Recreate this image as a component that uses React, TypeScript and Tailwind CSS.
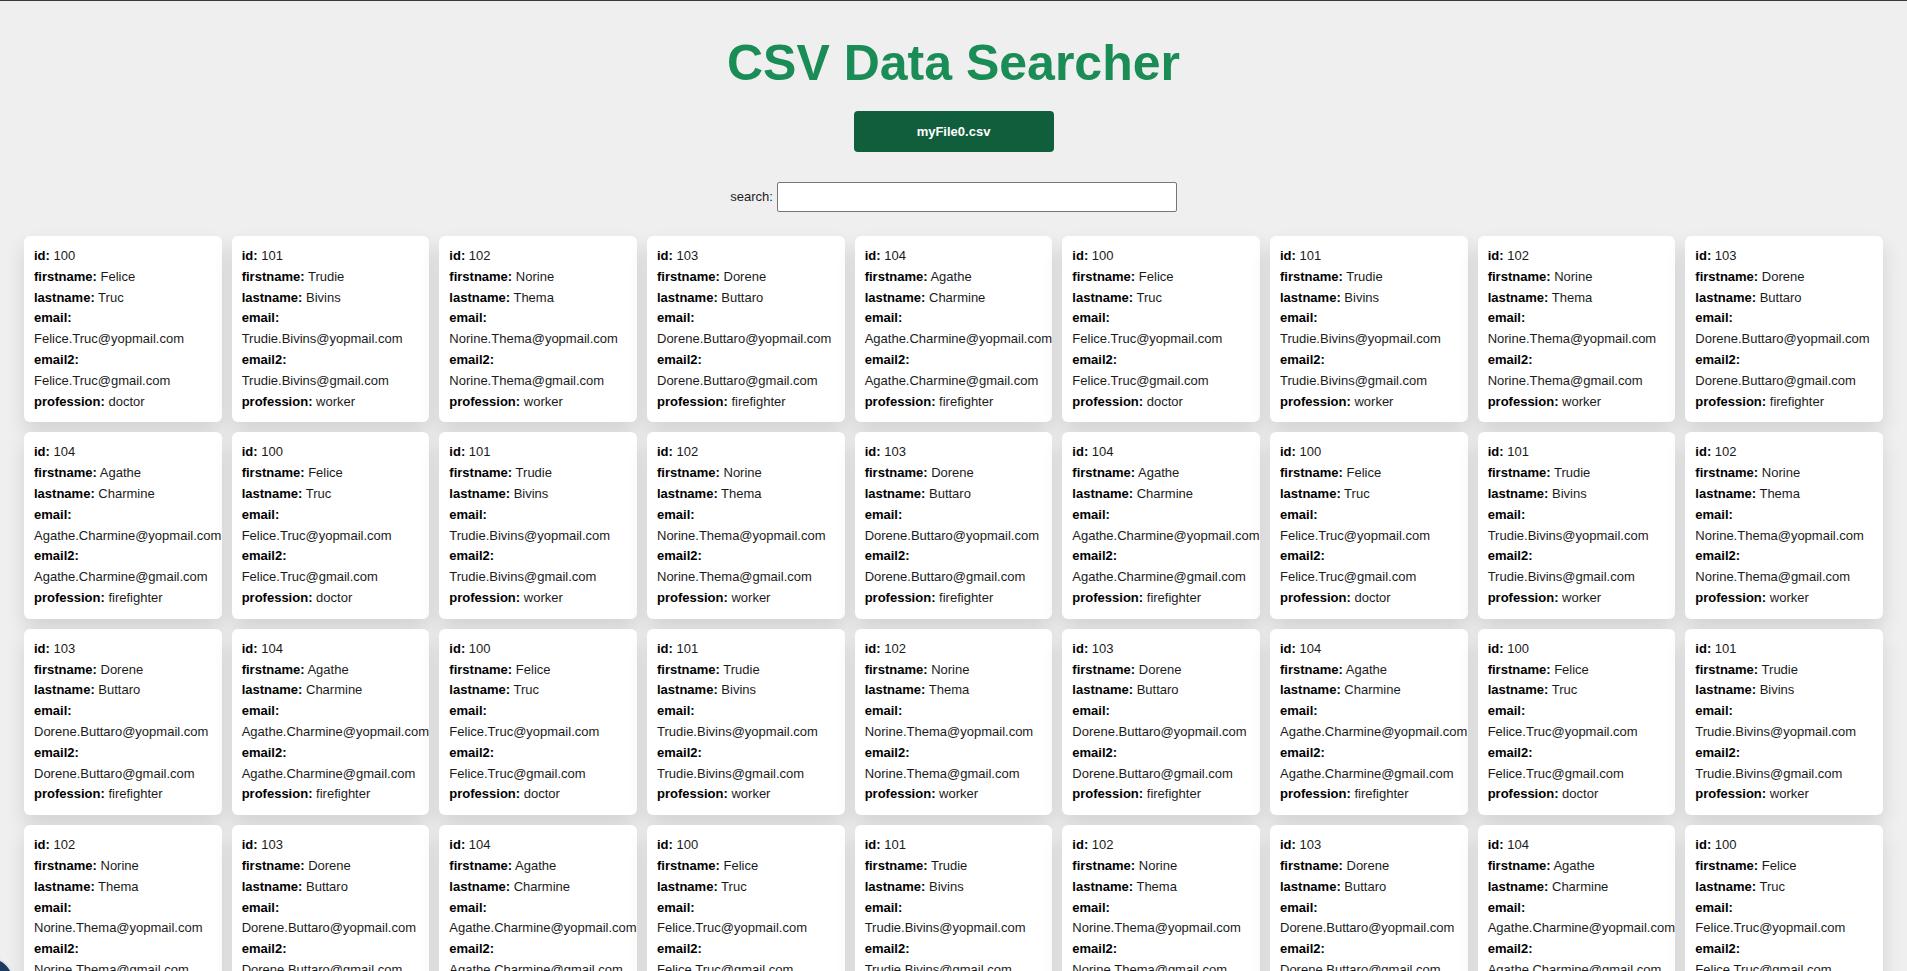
import React, { useState } from 'react';

interface Person {
    id: number;
    firstname: string;
    lastname: string;
    profession: string;
}

const people: Person[] = [
    { id: 100, firstname: 'Felice', lastname: 'Truc', profession: 'doctor' },
    { id: 101, firstname: 'Trudie', lastname: 'Bivins', profession: 'worker' },
    { id: 102, firstname: 'Norine', lastname: 'Thema', profession: 'worker' },
    { id: 103, firstname: 'Dorene', lastname: 'Buttaro', profession: 'firefighter' },
    { id: 104, firstname: 'Agathe', lastname: 'Charmine', profession: 'firefighter' },
];

// the csv just repeats the same five rows over and over
const rows = Array.from({ length: 54 }, (_, i) => people[i % people.length]);

const Field: React.FC<{ label: string; value: string | number; block?: boolean }> = ({ label, value, block }) => (
    <div className="whitespace-nowrap">
        <b className="font-bold text-black">{label}:</b>
        {block ? <div className="text-[#1a1a1a]">{value}</div> : <span className="text-[#1a1a1a]"> {value}</span>}
    </div>
);

const Card: React.FC<{ p: Person }> = ({ p }) => (
    <div className="bg-white rounded-[6px] p-[10px] text-[13px] leading-[20.8px] shadow-[0_10px_20px_rgba(0,0,0,0.12)]">
        <Field label="id" value={p.id} />
        <Field label="firstname" value={p.firstname} />
        <Field label="lastname" value={p.lastname} />
        <Field label="email" value={`${p.firstname}.${p.lastname}@yopmail.com`} block />
        <Field label="email2" value={`${p.firstname}.${p.lastname}@gmail.com`} block />
        <Field label="profession" value={p.profession} />
    </div>
);

export default function App() {
    const [query, setQuery] = useState('');

    const filtered = rows.filter(r =>
        !query ||
        Object.values(r).some(v => String(v).toLowerCase().includes(query.toLowerCase()))
    );

    return (
        <div className="relative h-[971px] overflow-hidden bg-[#efefef] border-t border-[#3a3a3a] font-['Liberation_Sans',Arial,sans-serif]">
            <h1 className="mt-[37px] text-center text-[50px] leading-[50px] font-bold text-[#1a8c55]">CSV Data Searcher</h1>

            <div className="flex justify-center mt-[23px]">
                <button className="w-[200px] h-[41px] rounded-[4px] bg-[#115e3c] text-white text-[13px] font-bold">
                    myFile0.csv
                </button>
            </div>

            <div className="flex justify-center items-center mt-[30px] text-[13px] text-[#222]">
                <label htmlFor="search" className="mr-[4px]">search:</label>
                <input
                    id="search"
                    value={query}
                    onChange={e => setQuery(e.target.value)}
                    className="w-[400px] h-[30px] bg-white border border-[#767676] rounded-[2px] px-1 outline-none"
                />
            </div>

            <div className="grid grid-cols-9 gap-[10px] px-[24px] mt-[24px]">
                {filtered.map((p, i) => (
                    <Card key={i} p={p} />
                ))}
            </div>

            {/* floating widget peeking in from the bottom-left corner */}
            <div className="absolute left-[-32px] top-[956px] w-[46px] h-[46px] rounded-full bg-[#1f3a5c] border-2 border-[#dfe6ee]" />
        </div>
    );
}
